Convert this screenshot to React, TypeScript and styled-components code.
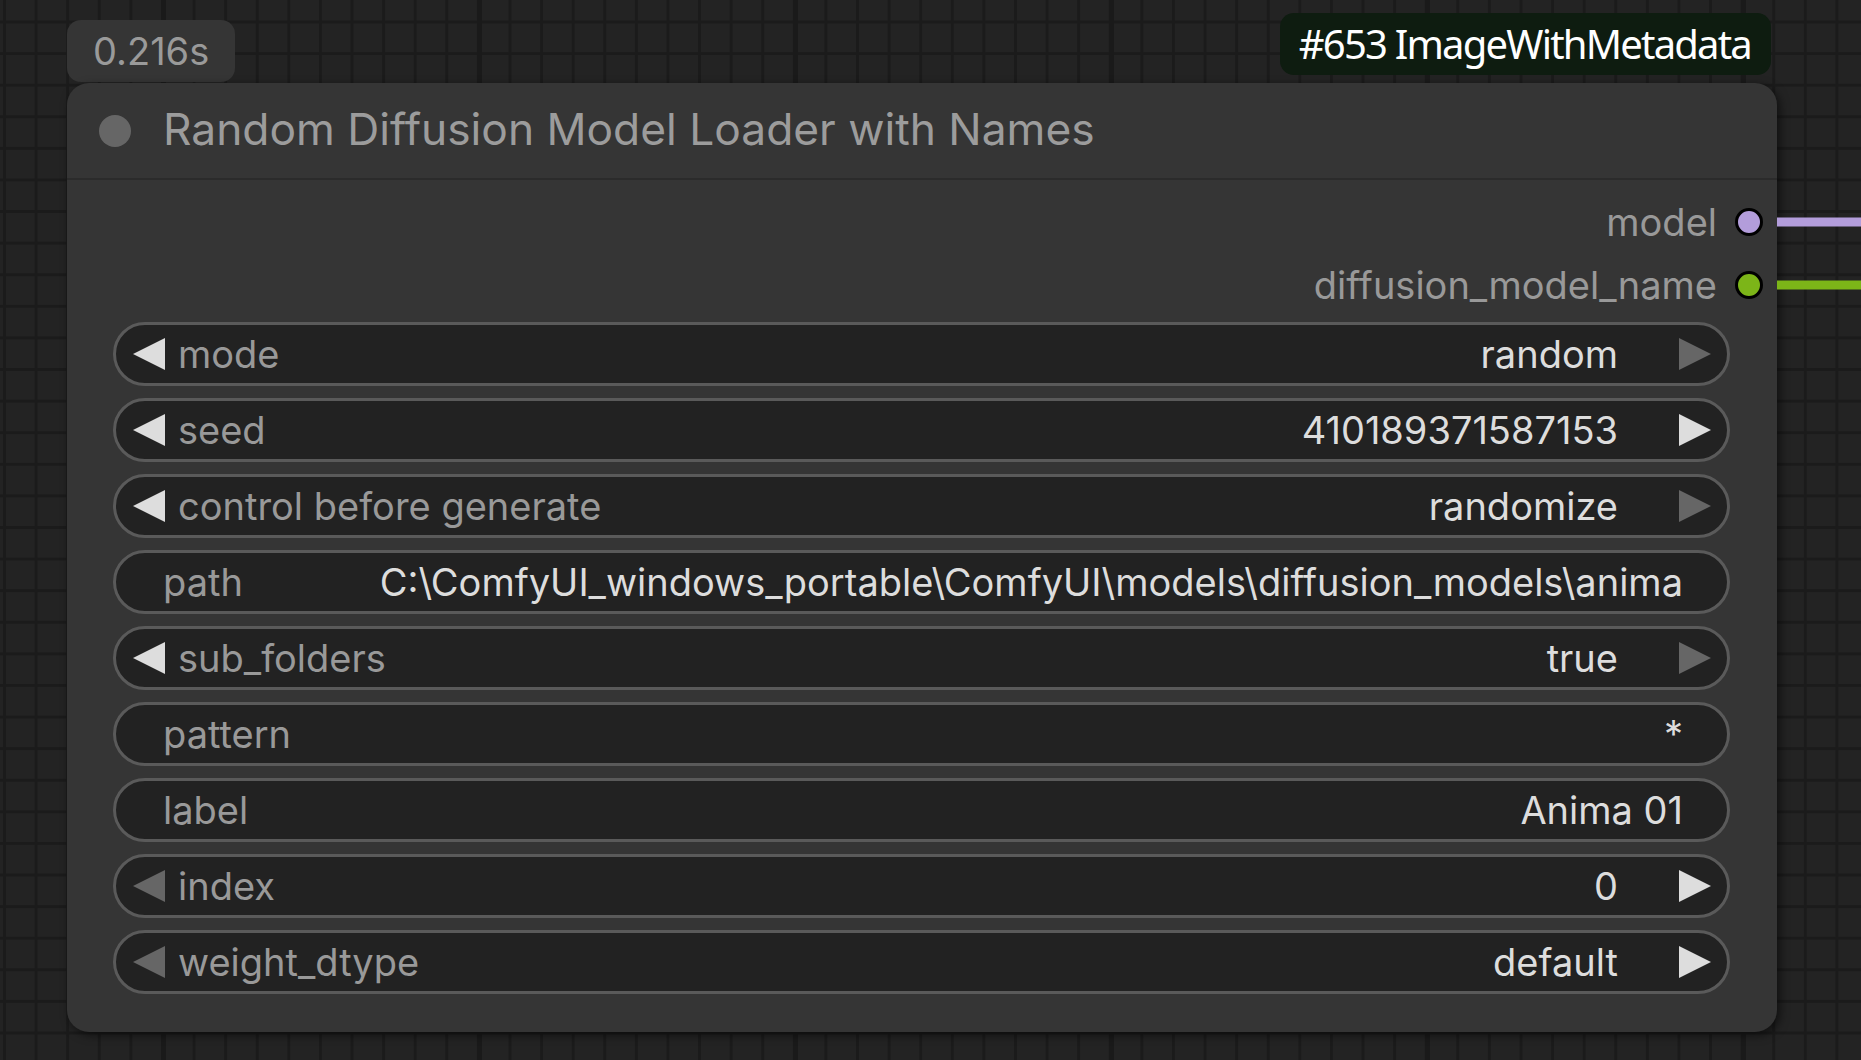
import React from "react";
import styled, { createGlobalStyle } from "styled-components";

const GlobalStyle = createGlobalStyle`
  html, body {
    margin: 0;
    padding: 0;
    background: #222222;
  }
  body {
    font-family: Inter, "Noto Sans", sans-serif;
  }
`;

const Canvas = styled.div`
  position: relative;
  width: 1861px;
  height: 1060px;
  overflow: hidden;
  background-color: #232323;
  background-image: linear-gradient(to right, #1a1a1a 5px, transparent 5px),
    linear-gradient(to right, #1b1b1b 3px, transparent 3px),
    linear-gradient(to bottom, #1b1b1b 3px, transparent 3px);
  background-size: 316px 100%, 31.6px 31.6px, 31.6px 31.6px;
  background-position: 161px 0, 3px 0, 0 20.5px;
`;

// the node sits at its own spot on the free canvas
const NodeGroup = styled.div`
  position: absolute;
  left: 67px;
  top: 13px;
  width: 1710px;
  display: flex;
  flex-direction: column;
`;

const BadgeRow = styled.div`
  display: flex;
  justify-content: space-between;
  align-items: flex-end;
  margin-bottom: 1px;
`;

const TimeBadge = styled.div`
  height: 62px;
  display: flex;
  align-items: center;
  padding: 0 26px;
  box-sizing: border-box;
  background: #353535;
  border-radius: 14px;
  color: #9a9a9a;
  font-family: Inter, sans-serif;
  font-size: 38px;
`;

const IdBadge = styled.div`
  height: 62px;
  display: flex;
  align-items: center;
  padding: 0 20px 2px 19px;
  box-sizing: border-box;
  margin: 0 6px 7px 0;
  background: #0e1c10;
  border-radius: 14px;
  color: #ffffff;
  font-family: "Noto Sans", sans-serif;
  font-size: 40px;
  letter-spacing: -1.8px;
`;

const Node = styled.div`
  background: #353535;
  border-radius: 22px;
  box-shadow: 3px 3px 10px rgba(0, 0, 0, 0.55);
  display: flex;
  flex-direction: column;
`;

const Header = styled.div`
  height: 95px;
  display: flex;
  align-items: center;
  gap: 32px;
  padding-left: 32px;
  border-bottom: 2px solid #2b2b2b;
`;

const StatusDot = styled.span`
  width: 32px;
  height: 32px;
  border-radius: 50%;
  background: #666666;
  flex: none;
`;

const Title = styled.div`
  color: #9c9c9c;
  font-size: 44.3px;
  padding-bottom: 3px;
`;

const Body = styled.div`
  display: flex;
  flex-direction: column;
  padding: 10px 0 38px;
  gap: 6px;
`;

const Outputs = styled.div`
  display: flex;
  flex-direction: column;
  padding-right: 14px;
`;

const OutputRow = styled.div`
  position: relative;
  height: 63px;
  display: flex;
  align-items: center;
  justify-content: flex-end;
  gap: 18px;
  color: #999999;
  font-size: 38px;
`;

const SlotDot = styled.span<{ $color: string }>`
  width: 28px;
  height: 28px;
  box-sizing: border-box;
  border-radius: 50%;
  border: 3px solid #000;
  background: ${(p) => p.$color};
  flex: none;
`;

const Wire = styled.span<{ $color: string }>`
  position: absolute;
  left: calc(100% + 14px);
  top: 50%;
  width: 120px;
  height: 9px;
  transform: translateY(-50%);
  background: ${(p) => p.$color};
`;

const Widgets = styled.div`
  display: flex;
  flex-direction: column;
  gap: 12px;
  padding: 0 47px 0 46px;
`;

const Widget = styled.div<{ $arrows: boolean }>`
  height: 64px;
  box-sizing: border-box;
  border: 3px solid #5a5a5a;
  border-radius: 32px;
  background: #222222;
  display: flex;
  align-items: center;
  padding: ${(p) => (p.$arrows ? "0 16px 0 17px" : "0 44px 0 47px")};
  font-size: 38px;
  white-space: nowrap;
  overflow: hidden;
`;

const Label = styled.span<{ $arrows: boolean }>`
  color: #999999;
  margin-left: ${(p) => (p.$arrows ? "13px" : "0")};
  flex: none;
`;

const Value = styled.span<{ $arrows: boolean }>`
  color: #dddddd;
  margin-left: auto;
  margin-right: ${(p) => (p.$arrows ? "61px" : "0")};
  padding-left: 24px;
  overflow: hidden;
  text-overflow: ellipsis;
`;

const Arrow = ({ dir, on }: { dir: "left" | "right"; on: boolean }) => (
  <svg width="32" height="32" viewBox="0 0 32 32" style={{ flex: "none" }}>
    <polygon
      points={dir === "left" ? "0,16 32,0 32,32" : "0,0 32,16 0,32"}
      fill={on ? "#dddddd" : "#666666"}
    />
  </svg>
);

type WidgetDef = {
  label: string;
  value: string;
  arrows?: [boolean, boolean];
};

const widgets: WidgetDef[] = [
  { label: "mode", value: "random", arrows: [true, false] },
  { label: "seed", value: "410189371587153", arrows: [true, true] },
  { label: "control before generate", value: "randomize", arrows: [true, false] },
  {
    label: "path",
    value: "C:\\ComfyUI_windows_portable\\ComfyUI\\models\\diffusion_models\\anima",
  },
  { label: "sub_folders", value: "true", arrows: [true, false] },
  { label: "pattern", value: "*" },
  { label: "label", value: "Anima 01" },
  { label: "index", value: "0", arrows: [false, true] },
  { label: "weight_dtype", value: "default", arrows: [false, true] },
];

const outputs = [
  { name: "model", color: "#b39ddb" },
  { name: "diffusion_model_name", color: "#7cb518" },
];

export default function App() {
  return (
    <>
      <GlobalStyle />
      <Canvas>
        <NodeGroup>
          <BadgeRow>
            <TimeBadge>0.216s</TimeBadge>
            <IdBadge>#653 ImageWithMetadata</IdBadge>
          </BadgeRow>
          <Node>
            <Header>
              <StatusDot />
              <Title>Random Diffusion Model Loader with Names</Title>
            </Header>
            <Body>
              <Outputs>
                {outputs.map((o) => (
                  <OutputRow key={o.name}>
                    {o.name}
                    <SlotDot $color={o.color} />
                    <Wire $color={o.color} />
                  </OutputRow>
                ))}
              </Outputs>
              <Widgets>
                {widgets.map((w) => {
                  const hasArrows = !!w.arrows;
                  return (
                    <Widget key={w.label} $arrows={hasArrows}>
                      {w.arrows && <Arrow dir="left" on={w.arrows[0]} />}
                      <Label $arrows={hasArrows}>{w.label}</Label>
                      <Value $arrows={hasArrows}>{w.value}</Value>
                      {w.arrows && <Arrow dir="right" on={w.arrows[1]} />}
                    </Widget>
                  );
                })}
              </Widgets>
            </Body>
          </Node>
        </NodeGroup>
      </Canvas>
    </>
  );
}
